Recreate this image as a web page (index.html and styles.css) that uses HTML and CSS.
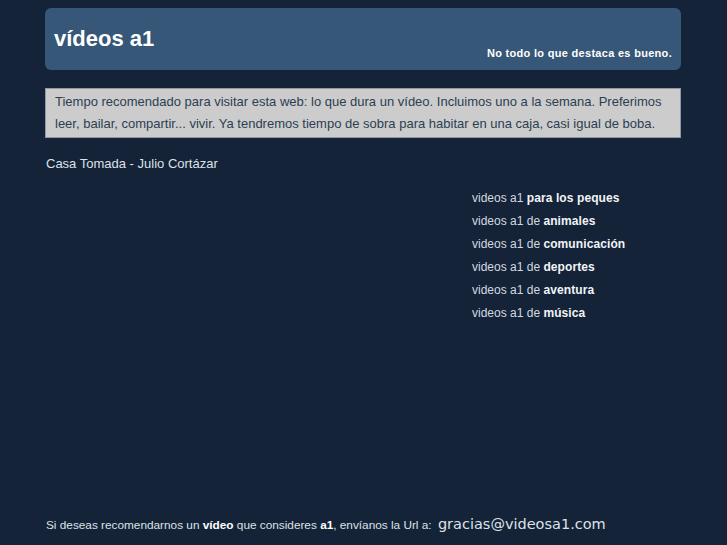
FILE: index.html
```html
<!DOCTYPE html>
<html lang="es">
<head>
<meta charset="utf-8">
<title>vídeos a1</title>
<link rel="stylesheet" href="styles.css">
</head>
<body>
<div class="page">
  <header class="head">
    <h1 class="title">vídeos a1</h1>
    <p class="tagline">No todo lo que destaca es bueno.</p>
  </header>
  <div class="intro">Tiempo recomendado para visitar esta web: lo que dura un vídeo. Incluimos uno a la semana. Preferimos leer, bailar, compartir... vivir. Ya tendremos tiempo de sobra para habitar en una caja, casi igual de boba.</div>
  <p class="story">Casa Tomada - Julio Cortázar</p>
  <div class="main">
    <div class="video"></div>
    <ul class="cats">
      <li>videos a1 <b>para los peques</b></li>
      <li>videos a1 de <b>animales</b></li>
      <li>videos a1 de <b>comunicación</b></li>
      <li>videos a1 de <b>deportes</b></li>
      <li>videos a1 de <b>aventura</b></li>
      <li>videos a1 de <b>música</b></li>
    </ul>
  </div>
  <footer class="foot">Si deseas recomendarnos un <b>vídeo</b> que consideres <b>a1</b>, envíanos la Url a: <span class="mail">gracias@videosa1.com</span></footer>
</div>
</body>
</html>
```

FILE: styles.css
```css
html, body {
  margin: 0;
  padding: 0;
  background: #142337;
}
body {
  font-family: "Liberation Sans", Arial, sans-serif;
  color: #dde2e8;
}
.page {
  width: 636px;
  margin: 0 0 0 45px;
  padding-top: 8px;
  display: flex;
  flex-direction: column;
  height: 545px;
  box-sizing: border-box;
}
.head {
  background: #365777;
  border-radius: 6px;
  height: 62px;
  box-sizing: border-box;
  padding: 0 9px;
  display: flex;
  justify-content: space-between;
  align-items: flex-start;
}
.title {
  margin: 0;
  padding-top: 18px;
  font-size: 22px;
  font-weight: bold;
  color: #ffffff;
  line-height: 26px;
}
.tagline {
  margin: 0;
  padding-top: 38px;
  font-size: 11px;
  font-weight: bold;
  color: #ffffff;
  line-height: 14px;
  letter-spacing: 0.3px;
}
.intro {
  margin-top: 18px;
  background: #cccccc;
  border: 1px solid #8d99a6;
  padding: 2px 9px;
  font-size: 13px;
  line-height: 22px;
  color: #2d3e52;
}
.story {
  margin: 18px 0 0 1px;
  font-size: 13px;
  line-height: 16px;
  color: #dde2e8;
}
.main {
  display: flex;
  justify-content: space-between;
  flex: 1;
}
.cats {
  list-style: none;
  margin: 15px 0 0 0;
  padding: 0;
  width: 209px;
  font-size: 12px;
  line-height: 23px;
  color: #d3d9e0;
}
.cats b { color: #f2f4f7; letter-spacing: 0.1px; }
.foot {
  margin: 0 0 10px 1px;
  font-size: 11.8px;
  line-height: 20px;
  color: #dde2e8;
}
.foot b { color: #ffffff; }
.mail {
  font-family: "DejaVu Sans", Verdana, sans-serif;
  font-size: 14.5px;
  margin-left: 3px;
}
```
